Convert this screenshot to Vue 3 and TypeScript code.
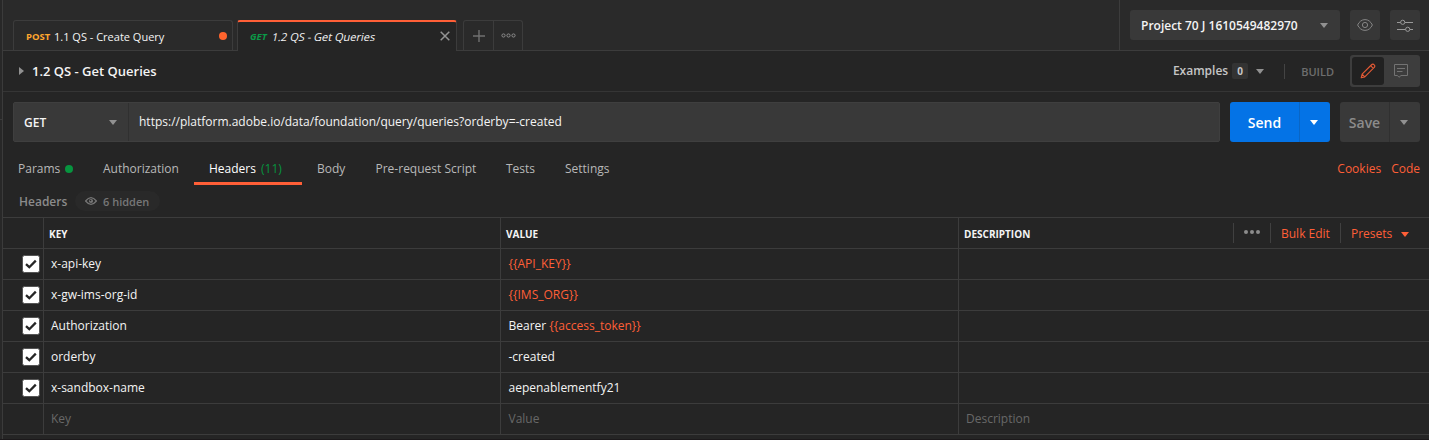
<script setup lang="ts">
interface HeaderRow {
  key: string
  plain: string
  variable: string
}

const rows: HeaderRow[] = [
  { key: 'x-api-key', plain: '', variable: '{{API_KEY}}' },
  { key: 'x-gw-ims-org-id', plain: '', variable: '{{IMS_ORG}}' },
  { key: 'Authorization', plain: 'Bearer ', variable: '{{access_token}}' },
  { key: 'orderby', plain: '-created', variable: '' },
  { key: 'x-sandbox-name', plain: 'aepenablementfy21', variable: '' },
]
</script>

<template>
  <div class="app">
    <div class="rail"><div class="rail-top"></div></div>
    <main class="main">
      <header class="topbar">
        <div class="tabs">
          <div class="tab first">
            <b class="method post">POST</b><span class="tab-name">1.1 QS - Create Query</span>
            <i class="unsaved"></i>
          </div>
          <div class="tab active">
            <b class="method get">GET</b><span class="tab-name active-name">1.2 QS - Get Queries</span>
            <svg class="close" width="10" height="10" viewBox="0 0 10 10"><path d="M.7.7 9.3 9.3M9.3.7.7 9.3" stroke="#949494" stroke-width="1.5" /></svg>
          </div>
          <div class="tab-tools">
            <div class="tool plus"><svg width="12" height="12" viewBox="0 0 12 12"><path d="M6 0V12M0 6H12" stroke="#707070" stroke-width="1.4" /></svg></div>
            <div class="tool"><svg width="15" height="5" viewBox="0 0 15 5" fill="none" stroke="#8c8c8c"><circle cx="2.5" cy="2.5" r="1.6" /><circle cx="7.5" cy="2.5" r="1.6" /><circle cx="12.5" cy="2.5" r="1.6" /></svg></div>
          </div>
        </div>
        <div class="env">
          <div class="env-select"><span class="env-name">Project 70 J 1610549482970</span><i class="caret"></i></div>
          <div class="icon-btn">
            <svg width="16" height="12" viewBox="0 0 16 12" fill="none" stroke="#858585"><path d="M.6 6C2.2 2.6 4.8.6 8 .6S13.8 2.6 15.4 6C13.8 9.400 11.200 11.400 8 11.400S2.200 9.400.6 6Z" /><circle cx="8" cy="6" r="2.600" /></svg>
          </div>
          <div class="icon-btn">
            <svg width="16" height="13" viewBox="0 0 16 13" fill="none" stroke="#999"><path d="M0 3.500H3.500M8 3.500H16M0 10.500H8.500M13 10.500H16" /><circle cx="5.700" cy="3.300" r="2.100" /><circle cx="10.700" cy="10.300" r="2.100" /></svg>
          </div>
        </div>
      </header>

      <section class="titlebar">
        <i class="expand"></i>
        <b class="title">1.2 QS - Get Queries</b>
        <div class="title-tools">
          <b class="examples">Examples</b><b class="count">0</b><i class="caret ex-caret"></i>
          <span class="vline"></span>
          <span class="build">BUILD</span>
          <div class="modes">
            <div class="mode on">
              <svg width="16" height="16" viewBox="0 0 16 16" fill="none" stroke="#e45a35" stroke-width="1.100" stroke-linejoin="round"><path d="M1.200 14.800 2.100 11.200 11.300 2Q13 .4 14.200 1.800 15.600 3 14 4.700L4.800 13.900ZM10.600 2.700 13.300 5.400M2.100 11.200 4.800 13.900" /></svg>
            </div>
            <div class="mode note">
              <svg width="14" height="14" viewBox="0 0 14 14" fill="none" stroke="#737373"><path d="M.5.5H13.500V11.500H7L5 13.300 3.500 11.500H.5ZM3 4.500H11M3 7.500H8.500" /></svg>
            </div>
          </div>
        </div>
      </section>

      <section class="request">
        <div class="url-box">
          <div class="verb"><b class="verb-name">GET</b><i class="caret"></i></div>
          <div class="url"><span class="url-text">https://platform.adobe.io/data/foundation/query/queries?orderby=-created</span></div>
        </div>
        <div class="button send"><b class="send-text">Send</b><div class="drop"><i class="caret white"></i></div></div>
        <div class="button save"><b class="save-text">Save</b><div class="drop"><i class="caret"></i></div></div>
      </section>

      <nav class="subtabs">
        <span class="sub params">Params<i class="green-dot"></i></span>
        <span class="sub auth">Authorization</span>
        <span class="sub selected">Headers <em class="num">(11)</em></span>
        <span class="sub body">Body</span>
        <span class="sub pre">Pre-request Script</span>
        <span class="sub tests">Tests</span>
        <span class="sub settings">Settings</span>
        <span class="links"><span class="cookies">Cookies</span><span class="code">Code</span></span>
      </nav>

      <div class="caption">
        <span class="caption-text">Headers</span>
        <div class="pill">
          <svg width="12" height="8" viewBox="0 0 12 8"><path d="M.6 4Q6-2.600 11.400 4 6 10.600.6 4Z" fill="none" stroke="#777" stroke-width="1.200" /><circle cx="6" cy="4" r="2.100" fill="#777" /><circle cx="5.500" cy="3.500" r=".8" fill="#292929" /></svg>
          <span class="hidden-text">6 hidden</span>
        </div>
      </div>

      <div class="table">
        <div class="row head">
          <div class="cell check"></div>
          <div class="cell"><b class="th">KEY</b></div>
          <div class="cell"><b class="th">VALUE</b></div>
          <div class="cell desc">
            <b class="th">DESCRIPTION</b>
            <div class="actions">
              <div class="more"><i></i><i></i><i></i></div>
              <div class="bulk">Bulk Edit</div>
              <div class="presets">Presets<i class="caret red"></i></div>
            </div>
          </div>
        </div>
        <div v-for="row in rows" :key="row.key" class="row">
          <div class="cell check">
            <svg class="box" width="18" height="18" viewBox="0 0 18 18"><rect x=".5" y=".5" width="17" height="17" rx="2" fill="#fff" stroke="#555" /><path d="M4 9.200 7.300 12.200 13.800 5.600" fill="none" stroke="#262626" stroke-width="2.300" /></svg>
          </div>
          <div class="cell">{{ row.key }}</div>
          <div class="cell value"><span class="pre-text">{{ row.plain }}<span class="variable">{{ row.variable }}</span></span></div>
          <div class="cell"></div>
        </div>
        <div class="row blank">
          <div class="cell check"></div>
          <div class="cell">Key</div>
          <div class="cell value">Value</div>
          <div class="cell">Description</div>
        </div>
      </div>
    </main>
  </div>
</template>

<style>
body { margin: 0; background: #252525; overflow: hidden; }
</style>

<style scoped>
* { box-sizing: border-box; }
.app { display: flex; width: 1429px; height: 440px; background: #252525; color: #f4f4f4; font: 12px/16px "Open Sans", sans-serif; white-space: nowrap; border-bottom: 1px solid #1c191b; }
.rail { width: 3px; flex: none; border-right: 1px solid #3b3b3b; background: #282828; }
.rail-top { height: 120px; border-bottom: 1px solid #3b3b3b; }
.main { flex: 1; min-width: 0; }
svg { display: block; flex: none; }
.topbar { height: 51px; display: flex; justify-content: space-between; background: #2a2a2a; border-bottom: 1px solid #3c3c3c; }
.tabs { display: flex; align-items: flex-start; padding: 20px 0 0 10px; height: 51px; }
.tab { height: 30px; border: 1px solid #3c3c3c; border-bottom: 0; border-radius: 3px 3px 0 0; display: flex; align-items: center; padding: 3px 5px 0 12px; }
.first { width: 220px; }
.active { width: 220px; height: 31px; margin-left: 4px; border-top: 2px solid #ff5f37; background: #252525; padding: 1px 6px 0 12px; }
.method { font-size: 9.5px; font-weight: 700; }
.post { color: #ffa62e; width: 28px; }
.get { color: #0b9a48; font-style: italic; width: 22px; }
.active-name { transform: skewX(-12deg); }
.tab-name { font-size: 11px; }
.unsaved { width: 8px; height: 8px; border-radius: 50%; background: #ff642d; margin: -3px 0 0 auto; }
.close { margin: -3px 0 0 auto; }
.tab-tools { display: flex; width: 60px; height: 30px; margin-left: 6px; border: 1px solid #3c3c3c; border-bottom: 0; border-radius: 3px 3px 0 0; }
.tool { flex: 1; display: flex; align-items: center; justify-content: center; }
.plus { flex: 0 0 30px; border-right: 1px solid #3c3c3c; }
.env { display: flex; width: 310px; padding: 10px 0 0 10px; gap: 10px; border-left: 1px solid #3c3c3c; }
.env-select { width: 210px; height: 30px; background: #393939; border-radius: 3px; display: flex; align-items: center; justify-content: space-between; padding: 0 12px 0 11px; }
.env-name { font-weight: 600; padding-top: 2px; }
.icon-btn { width: 30px; height: 30px; background: #373737; border-radius: 3px; display: flex; align-items: center; justify-content: center; }
.caret { width: 0; height: 0; border: 4px solid transparent; border-top: 5px solid #919191; border-bottom: 0; flex: none; }
.titlebar { height: 41px; border-bottom: 1px solid #353535; display: flex; align-items: center; padding: 0 9px 0 16px; }
.expand { border: 4px solid transparent; border-left: 5px solid #919191; border-right: 0; }
.title { margin-left: 8px; font-size: 13px; font-weight: 600; }
.title-tools { margin-left: auto; display: flex; align-items: center; }
.examples { font-weight: 600; color: #c6c6c6; }
.count { margin-left: 4px; width: 16px; height: 16px; border-radius: 2px; background: #333; font-size: 10px; line-height: 16px; text-align: center; color: #c6c6c6; }
.ex-caret { margin-left: 8px; }
.vline { height: 15px; width: 1px; background: #444; margin-left: 20px; }
.build { color: #6e6e6e; font-size: 11px; font-weight: 600; margin: 2px 16px 0 16px; }
.modes { width: 70px; height: 32px; border-radius: 3px; background: #3d3d3d; display: flex; padding: 2px; }
.mode { width: 32px; display: flex; align-items: center; justify-content: center; }
.note { width: 34px; }
.on { background: #212121; border-radius: 3px; }
.request { padding: 10px 9px 0 10px; display: flex; height: 50px; gap: 10px; }
.url-box { flex: 1; height: 40px; display: flex; background: #393939; border: 1px solid #3f3f3f; border-radius: 2px; }
.verb { width: 115px; border-right: 1px solid #303030; display: flex; align-items: center; justify-content: space-between; padding: 0 11px 0 10px; }
.verb-name { font-weight: 600; padding-top: 1px; }
.url { padding-left: 10px; line-height: 38px; }
.button { height: 40px; border-radius: 3px; display: flex; align-items: center; }
.button b { flex: 1; text-align: center; font-size: 14px; font-weight: 600; padding-top: 2px; }
.drop { width: 31px; height: 40px; border-left: 1px solid #0966c6; display: flex; align-items: center; justify-content: center; padding-right: 2px; }
.send { width: 100px; background: #0473e6; color: #fff; }
.save { width: 80px; background: #393939; color: #8c8c8c; }
.save .drop { border-color: #303030; }
.white { border-top-color: #fff; }
.red { border-top-color: #ff5f37; }
.subtabs { height: 43px; display: flex; padding: 10px 9px 0 15px; color: #b8b8b8; }
.sub { height: 33px; line-height: 33px; }
.params { width: 85px; display: flex; align-items: center; }
.green-dot { width: 8px; height: 8px; border-radius: 50%; background: #07943f; margin: 1px 0 0 5px; }
.auth { width: 91px; }
.selected { width: 108px; border-bottom: 3px solid #ff5f37; padding-left: 15px; color: #fff; }
.num { font-style: normal; color: #07943f; margin-left: 2px; }
.body { margin-left: 15px; width: 58.5px; }
.pre { width: 130.5px; }
.tests { width: 59px; }
.links { margin-left: auto; display: flex; gap: 10px; line-height: 33px; color: #ff5f37; }
.caption { height: 32px; display: flex; align-items: center; padding-left: 16px; color: #8b8b8b; font-weight: 600; }
.caption-text { width: 56px; padding-top: 2px; }
.pill { width: 85px; height: 20px; border-radius: 10px; background: #292929; display: flex; align-items: center; padding-left: 10px; gap: 6px; font-size: 11px; color: #777; }
.hidden-text { padding-top: 2px; }
.table { border-top: 1px solid #3c3c3c; }
.row { display: grid; grid-template-columns: 41px 457px 458px 1fr; height: 31px; border-bottom: 1px solid #3c3c3c; }
.cell { border-right: 1px solid #3c3c3c; padding-left: 7px; display: flex; align-items: center; }
.cell:last-child { border-right: 0; }
.value { padding-left: 7.5px; }
.check { padding-left: 19px; }
.head .cell { padding-left: 5px; }
.th { font-size: 10px; font-weight: 700; padding-top: 1px; }
.pre-text { white-space: pre; }
.variable { color: #ff5f37; }
.blank { color: #686868; }
.actions { margin-left: auto; display: flex; height: 22px; align-items: center; color: #ff5f37; }
.actions > div { height: 20px; border-left: 1px solid #404040; display: flex; align-items: center; }
.more { width: 37px; gap: 2px; padding: 0 0 2px 10px; }
.more i { width: 4px; height: 4px; border-radius: 50%; background: #8c8c8c; }
.bulk { width: 70px; padding: 2px 0 0 10px; }
.presets { width: 89px; padding: 2px 0 0 10px; }
.presets .caret { margin-left: 9px; }
</style>
